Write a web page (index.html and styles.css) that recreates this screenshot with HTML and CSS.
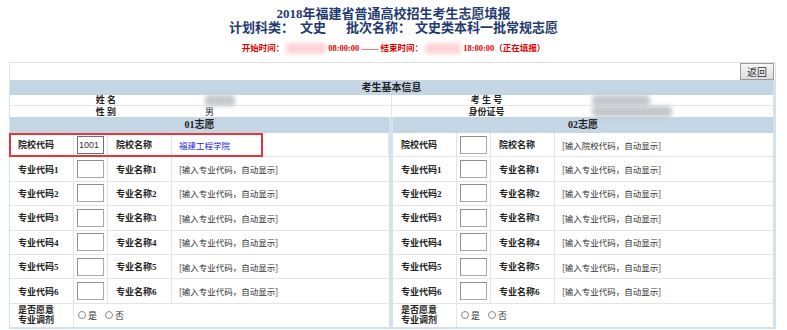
FILE: index.html
```html
<!DOCTYPE html>
<html lang="zh-CN">
<head>
<meta charset="utf-8">
<title>2018年福建省普通高校招生考生志愿填报</title>
<link rel="stylesheet" href="styles.css">
</head>
<body>
<div class="page">
  <header class="head">
    <h1 class="t1">2018年福建省普通高校招生考生志愿填报</h1>
    <div class="t2"><span class="k">计划科类：</span><span class="v1">文史</span><span class="k">批次名称：</span><span class="v2">文史类本科一批常规志愿</span></div>
    <div class="t3">开始时间：<span class="blur pink b1"></span>08:00:00 —— 结束时间：<span class="blur pink b2"></span>18:00:00（正在填报）</div>
  </header>

  <div class="box">
    <div class="toolbar"><button class="btn" type="button">返回</button></div>
    <div class="content">
      <div class="info">
        <div class="band">考生基本信息</div>
        <div class="info-grid">
          <div class="il">姓&nbsp;名</div>
          <div class="iv"><span class="blur gray g1"></span></div>
          <div class="il">考&nbsp;生&nbsp;号</div>
          <div class="iv"><span class="blur gray g2"></span></div>
          <div class="il">性&nbsp;别</div>
          <div class="iv">男</div>
          <div class="il">身份证号</div>
          <div class="iv"><span class="blur gray g3"></span></div>
        </div>
      </div>

      <div class="vols">
        <section class="vol">
          <div class="vband">01志愿</div>
          <div class="row first">
            <div class="c lab">院校代码</div>
            <div class="c inp"><input class="code active" type="text" value="1001"></div>
            <div class="c lab">院校名称</div>
            <div class="c txt"><a class="school" href="#">福建工程学院</a></div>
            <div class="hl"></div>
          </div>
          <div class="row"><div class="c lab">专业代码1</div><div class="c inp"><input class="code" type="text"></div><div class="c lab">专业名称1</div><div class="c txt">[输入专业代码，自动显示]</div></div>
          <div class="row"><div class="c lab">专业代码2</div><div class="c inp"><input class="code" type="text"></div><div class="c lab">专业名称2</div><div class="c txt">[输入专业代码，自动显示]</div></div>
          <div class="row"><div class="c lab">专业代码3</div><div class="c inp"><input class="code" type="text"></div><div class="c lab">专业名称3</div><div class="c txt">[输入专业代码，自动显示]</div></div>
          <div class="row"><div class="c lab">专业代码4</div><div class="c inp"><input class="code" type="text"></div><div class="c lab">专业名称4</div><div class="c txt">[输入专业代码，自动显示]</div></div>
          <div class="row"><div class="c lab">专业代码5</div><div class="c inp"><input class="code" type="text"></div><div class="c lab">专业名称5</div><div class="c txt">[输入专业代码，自动显示]</div></div>
          <div class="row"><div class="c lab">专业代码6</div><div class="c inp"><input class="code" type="text"></div><div class="c lab">专业名称6</div><div class="c txt">[输入专业代码，自动显示]</div></div>
          <div class="row last">
            <div class="c lab two">是否愿意<br>专业调剂</div>
            <div class="c radios">
              <label><input type="radio" name="tj1" class="rd">是</label>
              <label><input type="radio" name="tj1" class="rd">否</label>
            </div>
          </div>
        </section>

        <section class="vol">
          <div class="vband">02志愿</div>
          <div class="row"><div class="c lab">院校代码</div><div class="c inp"><input class="code" type="text"></div><div class="c lab">院校名称</div><div class="c txt">[输入院校代码，自动显示]</div></div>
          <div class="row"><div class="c lab">专业代码1</div><div class="c inp"><input class="code" type="text"></div><div class="c lab">专业名称1</div><div class="c txt">[输入专业代码，自动显示]</div></div>
          <div class="row"><div class="c lab">专业代码2</div><div class="c inp"><input class="code" type="text"></div><div class="c lab">专业名称2</div><div class="c txt">[输入专业代码，自动显示]</div></div>
          <div class="row"><div class="c lab">专业代码3</div><div class="c inp"><input class="code" type="text"></div><div class="c lab">专业名称3</div><div class="c txt">[输入专业代码，自动显示]</div></div>
          <div class="row"><div class="c lab">专业代码4</div><div class="c inp"><input class="code" type="text"></div><div class="c lab">专业名称4</div><div class="c txt">[输入专业代码，自动显示]</div></div>
          <div class="row"><div class="c lab">专业代码5</div><div class="c inp"><input class="code" type="text"></div><div class="c lab">专业名称5</div><div class="c txt">[输入专业代码，自动显示]</div></div>
          <div class="row"><div class="c lab">专业代码6</div><div class="c inp"><input class="code" type="text"></div><div class="c lab">专业名称6</div><div class="c txt">[输入专业代码，自动显示]</div></div>
          <div class="row last">
            <div class="c lab two">是否愿意<br>专业调剂</div>
            <div class="c radios">
              <label><input type="radio" name="tj2" class="rd">是</label>
              <label><input type="radio" name="tj2" class="rd">否</label>
            </div>
          </div>
        </section>
      </div>
    </div>
  </div>
</div>
</body>
</html>
```

FILE: styles.css
```css
html, body {
  margin: 0;
  padding: 0;
  background: #fff;
}
body {
  font-family: "Liberation Serif", "Noto Sans CJK SC", serif;
  color: #222;
}
.page {
  width: 787px;
}

/* ---------- header ---------- */
.head {
  text-align: center;
  padding-top: 7px;
}
.t1 {
  margin: 0;
  font-size: 13px;
  line-height: 14px;
  font-weight: bold;
  color: #1f3a70;
}
.t2 {
  font-size: 13px;
  line-height: 14px;
  font-weight: bold;
  color: #1f3a70;
}
.t2 .v1 {
  margin-left: 6px;
  margin-right: 20px;
}
.t2 .v2 {
  margin-left: 4px;
}
.t3 {
  margin-top: 7px;
  font-size: 8.5px;
  line-height: 12px;
  font-weight: bold;
  color: #e60000;
  display: flex;
  justify-content: center;
  align-items: center;
}
.blur {
  display: inline-block;
  filter: blur(2px);
  border-radius: 4px;
}
.pink {
  background: #fbd3d6;
  height: 11px;
}
.b1 { width: 40px; margin: 0 2px 0 2px; }
.b2 { width: 36px; margin: 0 2px 0 2px; }
.gray {
  background: #c4c7cb;
  height: 11px;
}
.g1 { width: 30px; }
.g2 { width: 58px; }
.g3 { width: 80px; }

/* ---------- box ---------- */
.box {
  margin: 8px 0 0 9px;
  width: 767px;
}
.toolbar {
  height: 17px;
  border: 1px solid #e1e1e1;
  border-bottom: none;
  display: flex;
  justify-content: flex-end;
  padding-right: 1px;
}
.btn {
  width: 34px;
  height: 17px;
  margin: 0;
  padding: 0;
  border: 1px solid #9a9a9a;
  background: linear-gradient(#f7f7f7, #dedede);
  font-family: "Noto Sans CJK SC", sans-serif;
  font-size: 10px;
  line-height: 15px;
  color: #333;
}
.content {
  background: #d4e2ed;
  padding: 0 3px 2px 1px;
}

/* ---------- basic info ---------- */
.band {
  height: 15px;
  line-height: 15px;
  background: #c4d6e4;
  text-align: center;
  font-size: 10px;
  font-weight: bold;
  color: #222;
}
.info-grid {
  display: grid;
  grid-template-columns: 192px 190px 189px 1fr;
  background: #fff;
}
.il, .iv {
  height: 11px;
  box-sizing: border-box;
  border-bottom: 1px solid #e6e6e6;
  font-size: 9px;
  line-height: 10px;
  display: flex;
  align-items: center;
}
.il {
  justify-content: center;
  font-weight: bold;
}
.iv {
  padding-left: 3px;
  border-right: 1px solid #e6e6e6;
}
.iv:nth-child(4n) { border-right: none; padding-left: 11px; }
.info-grid > :nth-last-child(-n+4) { border-bottom: none; }

/* ---------- volunteer panels ---------- */
.vols {
  display: grid;
  grid-template-columns: 379px 380px;
  column-gap: 4px;
}
.vol {
  background: #fff;
}
.vband {
  height: 16px;
  line-height: 16px;
  background: #c4d6e4;
  text-align: center;
  font-size: 10px;
  font-weight: bold;
  color: #222;
}
.row {
  display: grid;
  grid-template-columns: 64px 34px 64px 1fr;
  height: 24.4px;
  box-sizing: border-box;
  border-bottom: 1px solid #e4e4e4;
}
.row.first {
  position: relative;
}
.row.last {
  grid-template-columns: 64px 1fr;
  height: 23px;
  border-bottom: none;
}
.c {
  display: flex;
  align-items: center;
  border-right: 1px solid #e4e4e4;
  min-width: 0;
}
.c:last-child { border-right: none; }
.lab {
  padding-left: 8px;
  font-size: 9px;
  font-weight: bold;
  color: #222;
  white-space: nowrap;
}
.lab.two {
  line-height: 10.5px;
  white-space: normal;
}
.inp {
  padding-left: 3px;
}
.code {
  width: 27px;
  height: 18px;
  box-sizing: border-box;
  margin: 0;
  padding: 0 1px;
  border: 1px solid #a9a9a9;
  border-top-color: #8f8f8f;
  border-left-color: #8f8f8f;
  background: #fff;
  font-family: "Liberation Sans", sans-serif;
  font-size: 9px;
  color: #333;
  outline: none;
}
.code.active {
  border-color: #6f6f6f;
}
.txt {
  padding-left: 7px;
  font-family: "Noto Sans CJK SC", sans-serif;
  font-size: 8.5px;
  color: #333;
  white-space: nowrap;
}
.school {
  color: #2323d8;
  text-decoration: none;
  font-size: 8.5px;
}
.hl {
  position: absolute;
  left: -1px;
  top: 0;
  width: 254px;
  height: 24px;
  box-sizing: border-box;
  border: 2px solid #e6353b;
  pointer-events: none;
}
.radios {
  padding-left: 4px;
  gap: 8px;
  font-family: "Noto Sans CJK SC", sans-serif;
  font-size: 9px;
  color: #333;
}
.radios label {
  display: flex;
  align-items: center;
}
.rd {
  appearance: none;
  -webkit-appearance: none;
  width: 8px;
  height: 8px;
  margin: 0 2px 0 0;
  border: 1px solid #8a8a8a;
  border-radius: 50%;
  background: #fff;
}
```
